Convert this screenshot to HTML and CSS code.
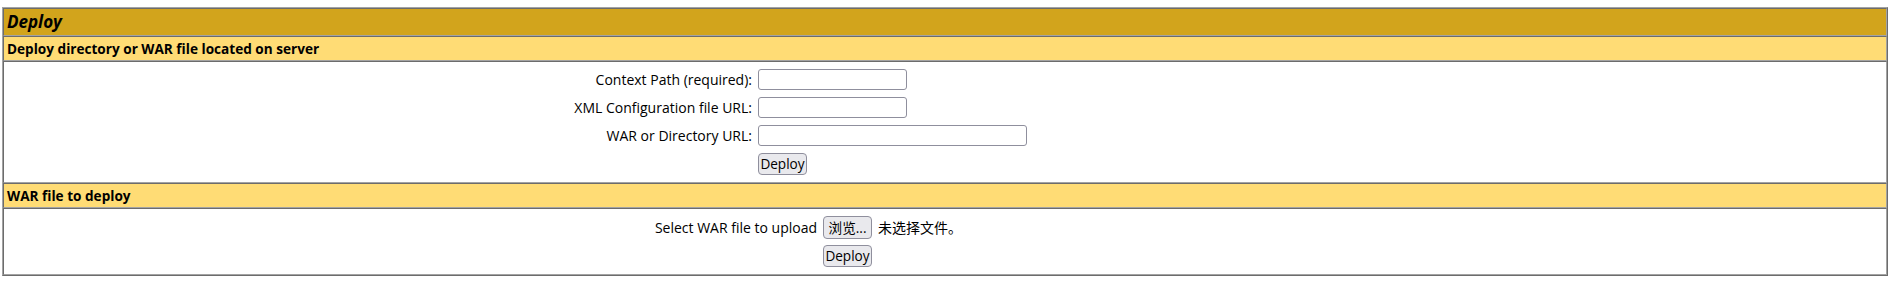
FILE: index.html
```html
<!DOCTYPE html>
<html lang="zh">
<head>
<meta charset="utf-8">
<title>Deploy</title>
<link rel="stylesheet" href="styles.css">
</head>
<body>
<div class="panel">
  <div class="cell title">Deploy</div>
  <div class="cell header">Deploy directory or WAR file located on server</div>
  <div class="cell body">
    <form class="form form-server">
      <div class="label">Context Path (required):</div>
      <div class="field"><input type="text" class="text short"></div>
      <div class="label">XML Configuration file URL:</div>
      <div class="field"><input type="text" class="text short"></div>
      <div class="label">WAR or Directory URL:</div>
      <div class="field"><input type="text" class="text long"></div>
      <div class="label"></div>
      <div class="field"><button type="button" class="btn deploy">Deploy</button></div>
    </form>
  </div>
  <div class="cell header">WAR file to deploy</div>
  <div class="cell body">
    <form class="form form-war">
      <div class="label">Select WAR file to upload</div>
      <div class="field"><button type="button" class="btn browse">浏览...</button><span class="nofile">未选择文件。</span></div>
      <div class="label"></div>
      <div class="field"><button type="button" class="btn deploy">Deploy</button></div>
    </form>
  </div>
</div>
</body>
</html>
```
FILE: styles.css
```css
body {
  margin: 7px 5px 0 2px;
  font-family: "Open Sans", "Noto Sans CJK SC", sans-serif;
  color: #000;
  background: #fff;
}

.panel {
  border: 1px solid;
  border-color: #a3a3a3 #6c6c6c #6c6c6c #a3a3a3;
}

.cell {
  border: 1px solid;
  border-color: #6c6c6c #a3a3a3 #a3a3a3 #6c6c6c;
  padding: 3px;
}

.title {
  background: #d2a41c;
  font-size: 17px;
  font-weight: bold;
  font-style: italic;
  line-height: 20px;
}

.header {
  background: #ffdc75;
  font-size: 13.6px;
  font-weight: bold;
  line-height: 17px;
}

.body {
  background: #fff;
}

.form {
  display: grid;
  margin: 0;
  padding-bottom: 2px;
  font-size: 14px;
}

.form-server {
  grid-template-columns: 748fr 1128fr;
  grid-auto-rows: 28px;
}

.form-war {
  grid-template-columns: 813fr 1063fr;
  grid-template-rows: 29px 28px;
}

.label {
  display: flex;
  align-items: center;
  justify-content: flex-end;
  padding: 4px 3px 3px;
  white-space: nowrap;
}

.field {
  display: flex;
  align-items: flex-start;
  padding: 4px 3px 0;
}

.text {
  box-sizing: border-box;
  height: 21px;
  margin: 0;
  border: 1px solid #8f8f9d;
  border-radius: 3px;
  background: #fff;
  padding: 0 4px;
  font: inherit;
}

.short { width: 149px; }
.long { width: 269px; }

.btn {
  box-sizing: border-box;
  width: 49px;
  margin: 0;
  padding: 0;
  border: 1px solid #8f8f9d;
  border-radius: 4px;
  background: #e9e9ed;
  color: #000;
  font: inherit;
  font-size: 13.6px;
  line-height: 1;
}

.deploy { height: 22px; }
.browse { height: 23px; }

.nofile {
  margin-left: 6px;
  line-height: 23px;
  white-space: nowrap;
}
```
